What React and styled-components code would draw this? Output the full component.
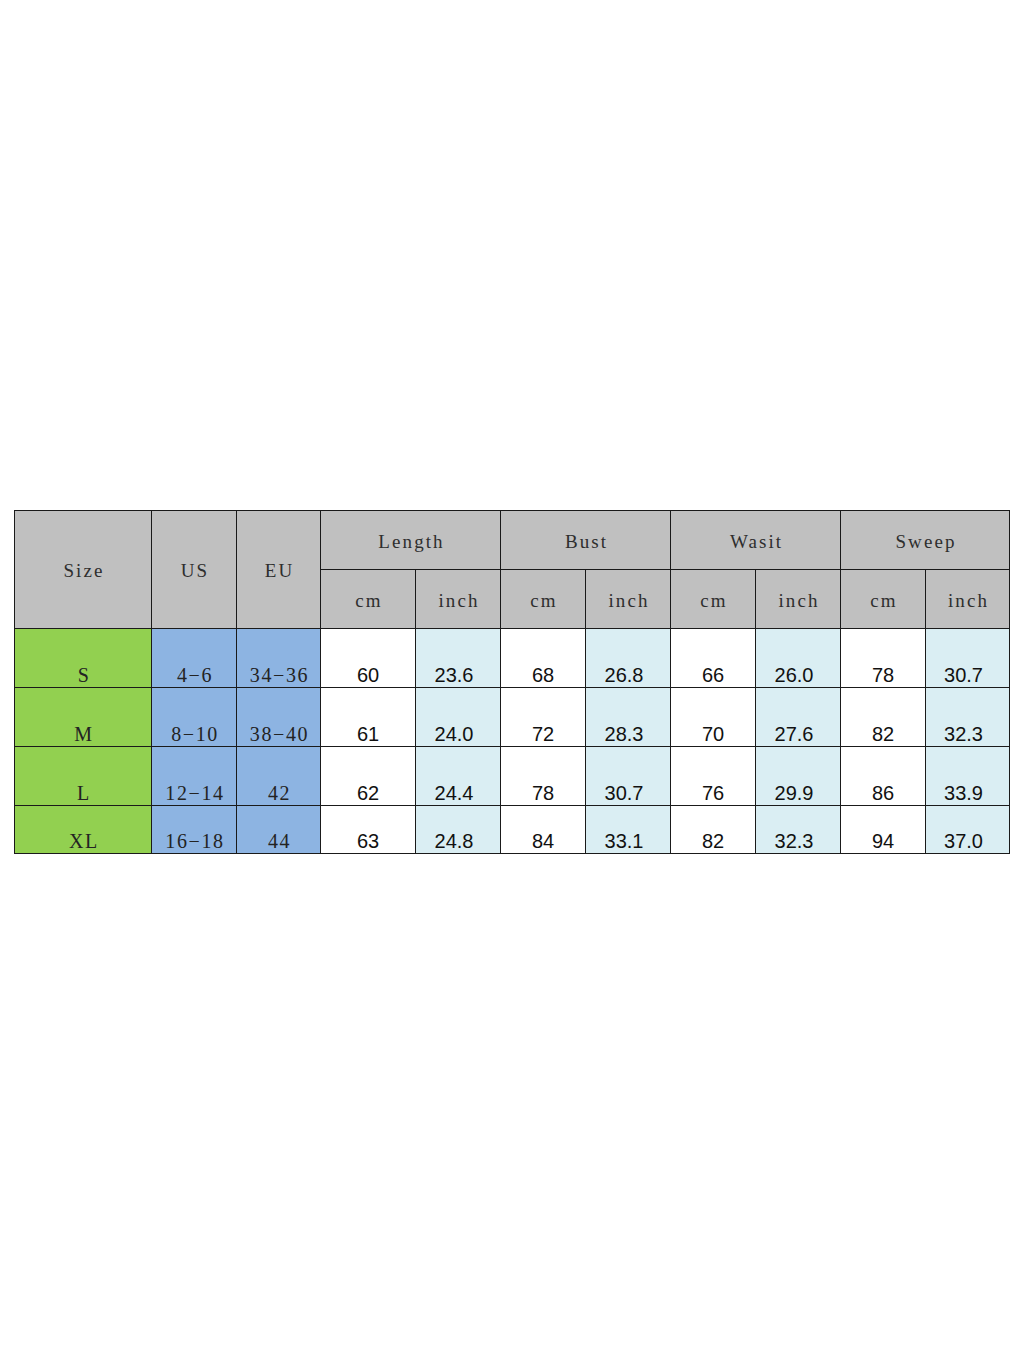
import React from 'react';
import styled, { createGlobalStyle } from 'styled-components';

const GlobalStyle = createGlobalStyle`
  html, body {
    margin: 0;
    padding: 0;
    background: #ffffff;
  }
`;

const rows = [
  { size: 'S', us: '4-6', eu: '34-36', vals: ['60', '23.6', '68', '26.8', '66', '26.0', '78', '30.7'] },
  { size: 'M', us: '8-10', eu: '38-40', vals: ['61', '24.0', '72', '28.3', '70', '27.6', '82', '32.3'] },
  { size: 'L', us: '12-14', eu: '42', vals: ['62', '24.4', '78', '30.7', '76', '29.9', '86', '33.9'] },
  { size: 'XL', us: '16-18', eu: '44', vals: ['63', '24.8', '84', '33.1', '82', '32.3', '94', '37.0'] },
];

const groups = ['Length', 'Bust', 'Wasit', 'Sweep'];
const colWidths = [137, 85, 84, 95, 85, 85, 85, 85, 85, 85, 84];

// dashes in the size ranges are full-width in the original chart
const range = (s) => s.replace('-', '\u2212');

const App = () => {
  return (
    <Page>
      <GlobalStyle />
      <Chart>
        <colgroup>
          {colWidths.map((w, i) => (
            <col key={i} style={{ width: w }} />
          ))}
        </colgroup>
        <thead>
          <HeadRow>
            <HeadCell rowSpan={2}>Size</HeadCell>
            <HeadCell rowSpan={2}>US</HeadCell>
            <HeadCell rowSpan={2}>EU</HeadCell>
            {groups.map((g) => (
              <HeadCell key={g} colSpan={2}>{g}</HeadCell>
            ))}
          </HeadRow>
          <HeadRow>
            {groups.map((g) => (
              <React.Fragment key={g}>
                <HeadCell>cm</HeadCell>
                <HeadCell>inch</HeadCell>
              </React.Fragment>
            ))}
          </HeadRow>
        </thead>
        <tbody>
          {rows.map((r, i) => (
            <DataRow key={r.size} $last={i === rows.length - 1}>
              <LabelCell $bg="#92d050">{r.size}</LabelCell>
              <LabelCell $bg="#8db4e2">{range(r.us)}</LabelCell>
              <LabelCell $bg="#8db4e2">{range(r.eu)}</LabelCell>
              {r.vals.map((v, j) => (
                <NumCell key={j} $inch={j % 2 === 1}>{v}</NumCell>
              ))}
            </DataRow>
          ))}
        </tbody>
      </Chart>
    </Page>
  );
};

export default App;

const Page = styled.div`
  width: 1024px;
  height: 1365px;
  box-sizing: border-box;
  padding: 510px 0 0 14px;
  background: #ffffff;
`;

const Chart = styled.table`
  width: 995px;
  table-layout: fixed;
  border-collapse: collapse;
  border: 1px solid #1a1a1a;
`;

const HeadRow = styled.tr`
  height: 59px;
`;

const HeadCell = styled.th`
  background: #c0c0c0;
  border: 1px solid #1a1a1a;
  padding: 3px 0 0 2px;
  text-align: center;
  vertical-align: middle;
  font-family: "Liberation Serif", "Times New Roman", serif;
  font-weight: normal;
  font-size: 19px;
  letter-spacing: 2.1px;
  color: #2e2e2e;
`;

const DataRow = styled.tr`
  height: ${(p) => (p.$last ? '48px' : '59px')};
`;

const LabelCell = styled.td`
  background: ${(p) => p.$bg};
  border: 1px solid #1a1a1a;
  padding: 0 0 1px 2px;
  text-align: center;
  vertical-align: bottom;
  font-family: "Liberation Serif", "Times New Roman", serif;
  font-size: 20px;
  line-height: 22px;
  letter-spacing: 1.6px;
  color: #232323;
`;

const NumCell = styled.td`
  background: ${(p) => (p.$inch ? '#daeef3' : '#ffffff')};
  border: 1px solid #1a1a1a;
  padding: 0 ${(p) => (p.$inch ? '8px' : '0')} 1px 0;
  text-align: center;
  vertical-align: bottom;
  font-family: "Liberation Sans", Arial, sans-serif;
  font-size: 20px;
  line-height: 22px;
  color: #111111;
`;
